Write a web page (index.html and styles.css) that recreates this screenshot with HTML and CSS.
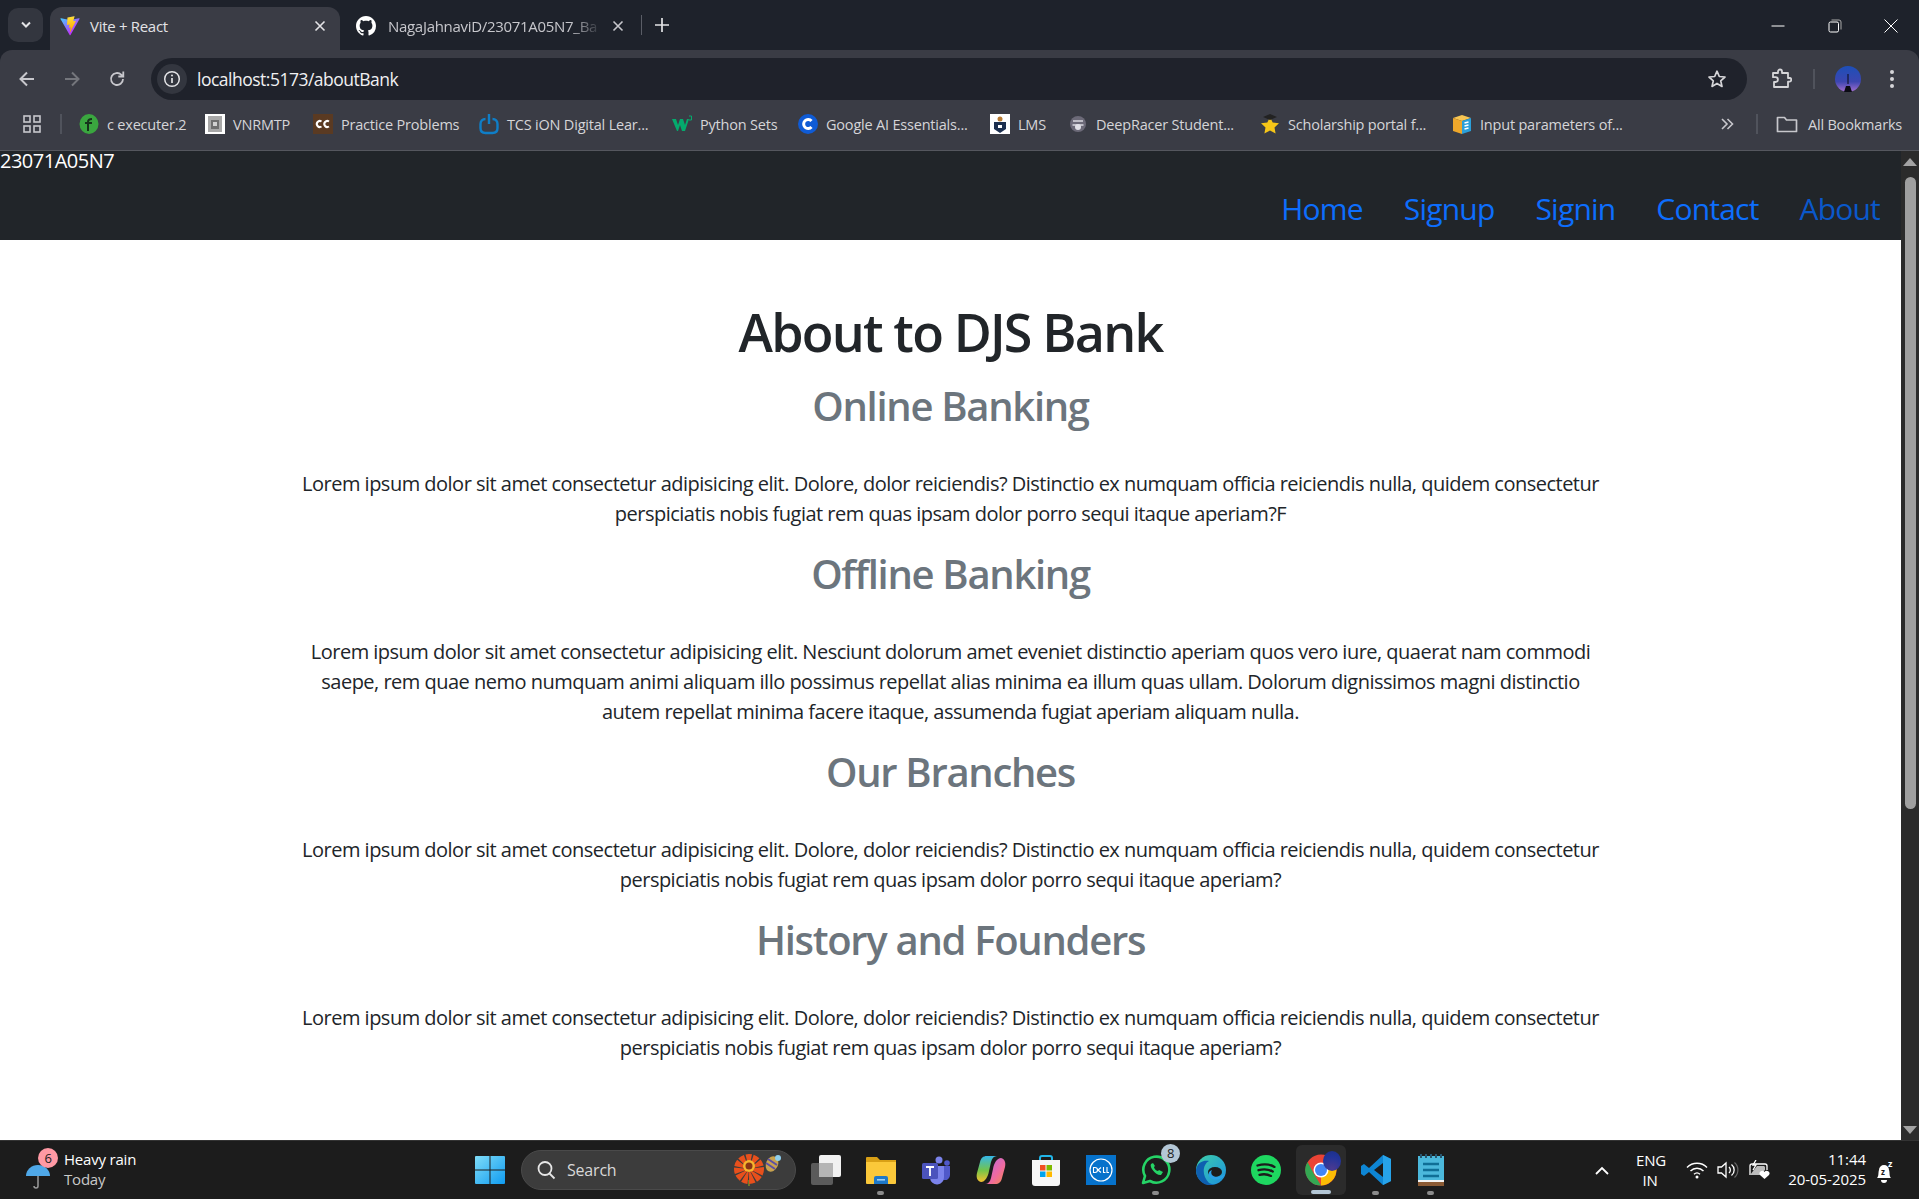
FILE: index.html
```html
<!DOCTYPE html>
<html lang="en">
<head>
    <meta charset="UTF-8">
    <meta name="viewport" content="width=device-width, initial-scale=1.0">
    <title>Vite + React</title>
    <link rel="stylesheet" href="styles.css">
</head>
<body>
    <!-- browser chrome -->
    <div class="tab-strip">
        <div class="tab-search">
            <svg width="12" height="8" viewBox="0 0 12 8"><path d="M2 1.5l4 4 4-4" fill="none" stroke="#e3e3e6" stroke-width="2"/></svg>
        </div>
        <div class="tab tab-active">
            <svg class="favicon" width="20" height="20" viewBox="0 0 410 404">
                <defs>
                    <linearGradient id="viteA" x1="6" y1="33" x2="235" y2="344" gradientUnits="userSpaceOnUse"><stop offset="0" stop-color="#41D1FF"/><stop offset="1" stop-color="#BD34FE"/></linearGradient>
                    <linearGradient id="viteB" x1="194" y1="8" x2="236" y2="292" gradientUnits="userSpaceOnUse"><stop offset="0" stop-color="#FFEA83"/><stop offset=".08" stop-color="#FFDD35"/><stop offset="1" stop-color="#FFA800"/></linearGradient>
                </defs>
                <path fill="url(#viteA)" d="M399.641 59.5246L215.643 388.545C211.844 395.338 202.084 395.378 198.228 388.618L10.5817 59.5563C6.38087 52.1896 12.6802 43.2665 21.0281 44.7586L205.223 77.6824C206.398 77.8924 207.601 77.8904 208.776 77.6763L389.119 44.8058C397.439 43.2894 403.768 52.1434 399.641 59.5246Z"/>
                <path fill="url(#viteB)" d="M292.965 1.5744L156.801 28.2552C154.563 28.6937 152.906 30.5903 152.771 32.8664L144.395 174.33C144.198 177.662 147.258 180.248 150.51 179.498L188.42 170.749C191.967 169.931 195.172 173.055 194.443 176.622L183.18 231.775C182.422 235.487 185.907 238.661 189.532 237.56L212.947 230.446C216.577 229.344 220.065 232.527 219.297 236.242L201.398 322.875C200.278 328.294 207.486 331.249 210.492 326.603L212.5 323.5L323.454 102.072C325.312 98.3645 322.108 94.137 318.036 94.9228L279.014 102.454C275.347 103.161 272.227 99.746 273.262 96.1583L298.731 7.86689C299.767 4.27314 296.636 0.855181 292.965 1.5744Z"/>
            </svg>
            <span class="tab-title">Vite + React</span>
            <svg class="tab-close" width="12" height="12" viewBox="0 0 12 12"><path d="M1.5 1.5l9 9M10.5 1.5l-9 9" stroke="#e3e3e6" stroke-width="1.6"/></svg>
        </div>
        <div class="tab tab-other">
            <svg class="favicon" width="20" height="20" viewBox="0 0 16 16"><path fill="#fff" d="M8 0C3.58 0 0 3.58 0 8c0 3.54 2.29 6.53 5.47 7.59.4.07.55-.17.55-.38 0-.19-.01-.82-.01-1.49-2.01.37-2.53-.49-2.69-.94-.09-.23-.48-.94-.82-1.13-.28-.15-.68-.52-.01-.53.63-.01 1.08.58 1.23.82.72 1.21 1.87.87 2.33.66.07-.52.28-.87.51-1.07-1.78-.2-3.64-.89-3.64-3.95 0-.87.31-1.59.82-2.15-.08-.2-.36-1.02.08-2.12 0 0 .67-.21 2.2.82.64-.18 1.32-.27 2-.27.68 0 1.36.09 2 .27 1.53-1.04 2.2-.82 2.2-.82.44 1.1.16 1.92.08 2.12.51.56.82 1.27.82 2.15 0 3.07-1.87 3.75-3.65 3.95.29.25.54.73.54 1.48 0 1.07-.01 1.93-.01 2.2 0 .21.15.46.55.38A8.013 8.013 0 0016 8c0-4.42-3.58-8-8-8z"/></svg>
            <span class="tab-title tab-title-fade">NagaJahnaviD/23071A05N7_Ba</span>
            <svg class="tab-close" width="12" height="12" viewBox="0 0 12 12"><path d="M1.5 1.5l9 9M10.5 1.5l-9 9" stroke="#c7c7cc" stroke-width="1.6"/></svg>
        </div>
        <div class="tab-sep"></div>
        <svg class="tab-new" width="14" height="14" viewBox="0 0 14 14"><path d="M7 0v14M0 7h14" stroke="#e3e3e6" stroke-width="1.7"/></svg>
        <div class="window-controls">
            <svg width="14" height="14" viewBox="0 0 14 14"><path d="M0.5 7h13" stroke="#fff"/></svg>
            <svg width="14" height="14" viewBox="0 0 14 14"><rect x="1" y="3" width="9.5" height="10" rx="1.5" fill="none" stroke="#fff"/><path d="M3.5 1h7.5a2 2 0 0 1 2 2v7.5" fill="none" stroke="#aaa"/></svg>
            <svg width="14" height="14" viewBox="0 0 14 14"><path d="M.5.5l13 13M13.5.5l-13 13" stroke="#fff"/></svg>
        </div>
    </div>

    <div class="toolbar">
        <svg class="tool back" width="18" height="18" viewBox="0 0 18 18"><path d="M16 9H3M9 2.5L2.5 9 9 15.5" fill="none" stroke="#c7c7cc" stroke-width="2"/></svg>
        <svg class="tool forward" width="18" height="18" viewBox="0 0 18 18"><path d="M2 9h13M9 2.5L15.5 9 9 15.5" fill="none" stroke="#74767c" stroke-width="2"/></svg>
        <svg class="tool reload" width="18" height="18" viewBox="0 0 18 18"><path d="M15 9a6 6 0 1 1-1.8-4.3L15 6.5M15.3 1.5v5h-5" fill="none" stroke="#c7c7cc" stroke-width="1.8"/></svg>
        <div class="omnibox">
            <div class="site-info">
                <svg width="18" height="18" viewBox="0 0 18 18"><circle cx="9" cy="9" r="7.3" fill="none" stroke="#e3e3e6" stroke-width="1.5"/><path d="M9 8v5" stroke="#e3e3e6" stroke-width="1.7"/><circle cx="9" cy="5.5" r="1" fill="#e3e3e6"/></svg>
            </div>
            <span class="url">localhost:5173/aboutBank</span>
            <svg class="star" width="20" height="20" viewBox="0 0 20 20"><path d="M10 2.2l2.3 5.3 5.7.5-4.3 3.8 1.3 5.6-5-3-5 3 1.3-5.6L2 8l5.7-.5z" fill="none" stroke="#d5d5d8" stroke-width="1.7" stroke-linejoin="round"/></svg>
        </div>
        <svg class="ext" width="22" height="22" viewBox="0 0 22 22"><path d="M3 5h5V3.5a2 2 0 0 1 4 0V5h6v5h1.5a1.8 1.8 0 0 1 0 3.6H18V19H4v-5h1.5a2.4 2.4 0 0 0 0-4.8H3z" fill="none" stroke="#d5d5d8" stroke-width="1.8" stroke-linejoin="round"/></svg>
        <div class="tool-sep"></div>
        <svg class="avatar" width="26" height="26" viewBox="0 0 26 26">
            <defs><linearGradient id="sky" x1="0" y1="0" x2="0" y2="1"><stop offset="0" stop-color="#1d4fb8"/><stop offset=".6" stop-color="#3c46b0"/><stop offset="1" stop-color="#a56fd0"/></linearGradient></defs>
            <circle cx="13" cy="13" r="13" fill="url(#sky)"/>
            <path d="M12.500 8h1v10h-1zM9 26l2-6h4l2 6z" fill="#0b0b14"/>
        </svg>
        <svg class="dots" width="6" height="20" viewBox="0 0 6 20"><circle cx="3" cy="3" r="2" fill="#d5d5d8"/><circle cx="3" cy="10" r="2" fill="#d5d5d8"/><circle cx="3" cy="17" r="2" fill="#d5d5d8"/></svg>
    </div>

    <div class="bookmarks">
        <svg class="apps" width="20" height="20" viewBox="0 0 20 20"><g fill="none" stroke="#c7c7cc" stroke-width="1.6"><rect x="2" y="2" width="6" height="6"/><rect x="12" y="2" width="6" height="6"/><rect x="2" y="12" width="6" height="6"/><rect x="12" y="12" width="6" height="6"/></g></svg>
        <div class="bm-sep"></div>
        <div class="bm-list">
            <div class="bm"><svg width="20" height="20" viewBox="0 0 20 20"><ellipse cx="10" cy="10" rx="9.5" ry="10" fill="#3aa63f"/><path d="M9 17V8c0-2 1-3 4-3M6 9h7" fill="none" stroke="#16331b" stroke-width="2"/></svg><span>c executer.2</span></div>
            <div class="bm"><svg width="20" height="20" viewBox="0 0 20 20"><rect width="20" height="20" fill="#fff"/><rect x="3" y="2" width="14" height="16" fill="#a8a8a8"/><rect x="6" y="6" width="8" height="9" fill="#6e6e6e"/><rect x="8" y="8" width="4" height="4" fill="#d0d0d0"/></svg><span>VNRMTP</span></div>
            <div class="bm"><svg width="20" height="20" viewBox="0 0 20 20"><rect width="20" height="20" fill="#5a3a22"/><path d="M8.500 7.500a3 3 0 1 0 0 5M16 7.500a3 3 0 1 0 0 5" fill="none" stroke="#fff" stroke-width="2"/></svg><span>Practice Problems</span></div>
            <div class="bm"><svg width="20" height="22" viewBox="0 0 20 22"><path d="M6 6H6.500C3.500 6 1.500 8 1.500 11v4c0 3 2 5 5 5h7c3 0 5-2 5-5v-4c0-3-2-5-5-5H14M10 1v10" fill="none" stroke="#0f7ec7" stroke-width="2.400"/></svg><span>TCS iON Digital Lear...</span></div>
            <div class="bm"><svg width="20" height="20" viewBox="0 0 20 20"><path d="M0 5h4l2 6 2-6h3l2 6 2-6h2l-4 12h-3l-2-6-2 6H5z" fill="#04aa6d"/><path d="M17 2h2.500v4H17" fill="none" stroke="#04aa6d"/></svg><span>Python Sets</span></div>
            <div class="bm"><svg width="20" height="20" viewBox="0 0 20 20"><circle cx="10" cy="10" r="10" fill="#0f5bd5"/><path d="M13.500 7a4.500 4.500 0 1 0 0 6" fill="none" stroke="#fff" stroke-width="3"/></svg><span>Google AI Essentials...</span></div>
            <div class="bm"><svg width="20" height="20" viewBox="0 0 20 20"><rect width="20" height="20" fill="#fff"/><path d="M4 8h12v7l-6 4-6-4z" fill="#1c2f4f"/><circle cx="10" cy="5" r="2.500" fill="#b77a32"/><rect x="8" y="11" width="4" height="3" fill="#fff"/></svg><span>LMS</span></div>
            <div class="bm"><svg width="20" height="20" viewBox="0 0 20 20"><circle cx="10" cy="10" r="8" fill="#6c6a78"/><path d="M5 7h10M4.500 11h11" stroke="#d8d8de" stroke-width="1.500"/><circle cx="10" cy="13" r="3" fill="#e0e0e6"/></svg><span>DeepRacer Student...</span></div>
            <div class="bm"><svg width="20" height="22" viewBox="0 0 20 22"><path d="M10 4l2.700 5.400 6.300.8-4.500 4.200 1.100 6L10 17.600l-5.600 2.800 1.100-6L1 10.200l6.300-.8z" fill="#f5c518"/><path d="M3 4l7-3 7 3-7 3z" fill="#222"/></svg><span>Scholarship portal f...</span></div>
            <div class="bm"><svg width="20" height="20" viewBox="0 0 20 20"><path d="M1 4l9-3 9 3-9 3z" fill="#f7c552"/><path d="M1 4l9 3v13l-9-3z" fill="#eea72b"/><path d="M10 7l9-3v13l-9 3z" fill="#2b9fd9"/><path d="M12.500 9l4-1M12.500 12l4-1M12.500 15l4-1" stroke="#fff" stroke-width="1.400"/></svg><span>Input parameters of...</span></div>
        </div>
        <svg class="bm-more" width="14" height="14" viewBox="0 0 14 14"><path d="M2 2l5 5-5 5M7.500 2l5 5-5 5" fill="none" stroke="#c7c7cc" stroke-width="1.600"/></svg>
        <div class="bm-sep bm-sep-right"></div>
        <div class="bm bm-all"><svg width="22" height="20" viewBox="0 0 22 20"><path d="M1.500 3.500h7l2 2.500h10v11.500h-19z" fill="none" stroke="#c7c7cc" stroke-width="1.700" stroke-linejoin="round"/></svg><span>All Bookmarks</span></div>
    </div>

    <!-- page -->
    <div class="viewport">
        <div class="page">
            <nav class="navbar">
                <div class="brand">23071A05N7</div>
                <div class="nav-links">
                    <a>Home</a>
                    <a>Signup</a>
                    <a>Signin</a>
                    <a>Contact</a>
                    <a class="nav-current">About</a>
                </div>
            </nav>
            <div class="container">
                <h1>About to DJS Bank</h1>
                <h2>Online Banking</h2>
                <p>Lorem ipsum dolor sit amet consectetur adipisicing elit. Dolore, dolor reiciendis? Distinctio ex numquam officia reiciendis nulla, quidem consectetur perspiciatis nobis fugiat rem quas ipsam dolor porro sequi itaque aperiam?F</p>
                <h2>Offline Banking</h2>
                <p>Lorem ipsum dolor sit amet consectetur adipisicing elit. Nesciunt dolorum amet eveniet distinctio aperiam quos vero iure, quaerat nam commodi saepe, rem quae nemo numquam animi aliquam illo possimus repellat alias minima ea illum quas ullam. Dolorum dignissimos magni distinctio autem repellat minima facere itaque, assumenda fugiat aperiam aliquam nulla.</p>
                <h2>Our Branches</h2>
                <p>Lorem ipsum dolor sit amet consectetur adipisicing elit. Dolore, dolor reiciendis? Distinctio ex numquam officia reiciendis nulla, quidem consectetur perspiciatis nobis fugiat rem quas ipsam dolor porro sequi itaque aperiam?</p>
                <h2>History and Founders</h2>
                <p>Lorem ipsum dolor sit amet consectetur adipisicing elit. Dolore, dolor reiciendis? Distinctio ex numquam officia reiciendis nulla, quidem consectetur perspiciatis nobis fugiat rem quas ipsam dolor porro sequi itaque aperiam?</p>
            </div>
        </div>
        <div class="scrollbar">
            <svg width="14" height="8" viewBox="0 0 14 8"><path d="M7 0l7 8H0z" fill="#a3a3a3"/></svg>
            <div class="scroll-thumb"></div>
            <div class="scroll-rest"></div>
            <svg width="14" height="8" viewBox="0 0 14 8"><path d="M7 8L0 0h14z" fill="#a3a3a3"/></svg>
        </div>
    </div>

    <!-- taskbar -->
    <div class="taskbar">
        <div class="weather">
            <div class="weather-icon">
                <svg width="26" height="26" viewBox="0 0 26 26"><path d="M1 12a12 11 0 0 1 24 0z" fill="#4fa8e8"/><path d="M13 12v10a2 2 0 0 1-4 0" fill="none" stroke="#9a9a9a" stroke-width="1.500"/></svg>
                <span class="badge-red">6</span>
            </div>
            <div class="weather-text">
                <div>Heavy rain</div>
                <div class="weather-sub">Today</div>
            </div>
        </div>
        <div class="task-center">
            <svg class="winlogo" width="30" height="30" viewBox="0 0 30 30"><defs><linearGradient id="win" x1="0" y1="0" x2="1" y2="1"><stop offset="0" stop-color="#7fdcf7"/><stop offset="1" stop-color="#0f9bf0"/></linearGradient></defs><path fill="url(#win)" d="M1 1h13.500v13.500H0V2a1 1 0 0 1 1-1zM15.500 1H29a1 1 0 0 1 1 1v12.500H15.500zM0 15.500h14.500V29H1a1 1 0 0 1-1-1zM15.500 15.500H30V28a1 1 0 0 1-1 1H15.500z"/></svg>
            <div class="task-search">
                <svg width="22" height="22" viewBox="0 0 22 22"><circle cx="10" cy="9.500" r="6.500" fill="none" stroke="#e6e6e6" stroke-width="1.800"/><path d="M14.500 14.500l5 5" stroke="#e6e6e6" stroke-width="1.800"/></svg>
                <span>Search</span>
                <svg class="search-art" width="48" height="32" viewBox="0 0 48 32">
                    <path d="M15 26v6" stroke="#6a7a2c" stroke-width="2"/>
                    <circle cx="15" cy="15" r="9" fill="none" stroke="#e8501c" stroke-width="12" stroke-dasharray="4 1"/>
                    <circle cx="15" cy="12" r="6" fill="#f5b52e"/>
                    <circle cx="15" cy="12" r="3.500" fill="#8a3414"/>
                    <ellipse cx="38" cy="10" rx="6" ry="8" fill="#c8a24f" transform="rotate(25 38 10)"/>
                    <path d="M34 5l9 6M32 9l9 6" stroke="#5b4fa6" stroke-width="2"/>
                    <circle cx="44" cy="4" r="3" fill="#8fd0ee"/>
                </svg>
            </div>
            <div class="task-icons">
                <div class="task-icon">
                    <svg width="30" height="30" viewBox="0 0 30 30"><rect x="0" y="8" width="22" height="22" rx="2" fill="#5b5b5b"/><rect x="8" y="0" width="22" height="22" rx="2" fill="#f1f1f1"/><rect x="8" y="8" width="14" height="14" fill="#b5b5b5"/></svg>
                </div>
                <div class="task-icon task-open">
                    <svg width="30" height="30" viewBox="0 0 30 30"><path d="M0 3a1 1 0 0 1 1-1h10l3 3h16v3H0z" fill="#d9a016"/><path d="M0 7h30v21a1 1 0 0 1-1 1H1a1 1 0 0 1-1-1z" fill="#fbc83a"/><path d="M8 29v-6a2 2 0 0 1 2-2h10a2 2 0 0 1 2 2v6z" fill="#1e78c8"/><rect x="11" y="24" width="8" height="1.600" fill="#9cd0f5"/></svg>
                </div>
                <div class="task-icon">
                    <svg width="30" height="30" viewBox="0 0 30 30"><circle cx="18" cy="5" r="3.500" fill="#7b83eb"/><circle cx="26" cy="8" r="2.800" fill="#5059c9"/><path d="M17 11h12v9a5 5 0 0 1-6 5l-6-3z" fill="#5059c9"/><path d="M9 11h14v11a7 7 0 0 1-14 1z" fill="#7b83eb"/><rect x="1" y="8" width="16" height="16" rx="1.500" fill="#4b53bc"/><path d="M5 12h8M9 12v9" stroke="#fff" stroke-width="1.800"/></svg>
                </div>
                <div class="task-icon">
                    <svg width="30" height="30" viewBox="0 0 30 30"><defs><linearGradient id="cop1" x1="0" y1="0" x2="0" y2="1"><stop offset="0" stop-color="#35b7e8"/><stop offset=".55" stop-color="#74c44a"/><stop offset="1" stop-color="#f6c02d"/></linearGradient><linearGradient id="cop2" x1="0" y1="0" x2="1" y2="1"><stop offset="0" stop-color="#b06ae8"/><stop offset=".6" stop-color="#f06aa0"/><stop offset="1" stop-color="#f58a4a"/></linearGradient></defs><path d="M11 1h10c-3 0-5 2-6 6l-2 9c-1 6-4 11-8 11-4-1-5-5-4-9l3-11c1-4 3-6 7-6z" fill="url(#cop1)"/><path d="M19 29H9c3 0 5-2 6-6l2-9c1-6 4-11 8-11 4 1 5 5 4 9l-3 11c-1 4-3 6-7 6z" fill="url(#cop2)"/></svg>
                </div>
                <div class="task-icon">
                    <svg width="30" height="32" viewBox="0 0 30 32"><path d="M9 7V4a2 2 0 0 1 2-2h8a2 2 0 0 1 2 2v3" fill="none" stroke="#21b5e8" stroke-width="2"/><path d="M1 6h28v23a3 3 0 0 1-3 3H4a3 3 0 0 1-3-3z" fill="#f6f6f6"/><rect x="9" y="11" width="5.500" height="5.500" fill="#f25022"/><rect x="15.500" y="11" width="5.500" height="5.500" fill="#7fba00"/><rect x="9" y="17.500" width="5.500" height="5.500" fill="#00a4ef"/><rect x="15.500" y="17.500" width="5.500" height="5.500" fill="#ffb900"/></svg>
                </div>
                <div class="task-icon">
                    <svg width="30" height="30" viewBox="0 0 30 30"><rect width="30" height="30" fill="#0672cb"/><circle cx="15" cy="15" r="11" fill="none" stroke="#fff" stroke-width="1.200"/><path d="M7.500 12.500v5h1.500a2.500 2.500 0 0 0 0-5zM12 15l3-2.500M12 15l3 2.500M17.500 12v5.500h2M21 12v5.500h2" fill="none" stroke="#fff" stroke-width="1.100"/></svg>
                </div>
                <div class="task-icon task-open">
                    <svg width="30" height="30" viewBox="0 0 30 30"><path d="M2 28l2-7a13 13 0 1 1 5 5z" fill="none" stroke="#25d366" stroke-width="2.600" stroke-linejoin="round"/><path d="M10 9c-2 3 5 12 10 11l2-3-4-2-1 1c-2 0-4-3-4-4l1-1-2-3z" fill="#25d366"/></svg>
                    <span class="badge-grey">8</span>
                </div>
                <div class="task-icon">
                    <svg width="30" height="30" viewBox="0 0 30 30"><defs><linearGradient id="edge" x1="0" y1="0" x2="1" y2="1"><stop offset="0" stop-color="#3fd0a8"/><stop offset="1" stop-color="#1a8fe0"/></linearGradient></defs><circle cx="15" cy="15" r="15" fill="url(#edge)"/><path d="M0 15C1 7 8 5 13 6c-6 3-8 14 0 22 2 1 4 2 7 1.500C10 33 0 26 0 15z" fill="#0e5fb0"/><ellipse cx="19" cy="17" rx="7" ry="5" fill="#1c1c1c"/><path d="M16 15c-2 3 0 7 5 7 3 0 6-1 8-3-2 6-12 8-16 2-1-3 0-5 3-6z" fill="#2aa0e8"/></svg>
                </div>
                <div class="task-icon">
                    <svg width="30" height="30" viewBox="0 0 30 30"><circle cx="15" cy="15" r="15" fill="#1ed760"/><path d="M6.500 10.500c6-1.800 12-1.400 17 1.400M7.500 15.200c5-1.400 10-1 14.300 1.300M8.500 19.800c4.300-1 8-.7 11.500 1.100" fill="none" stroke="#1c1c1c" stroke-width="2.300" stroke-linecap="round"/></svg>
                </div>
                <div class="task-icon task-active">
                    <svg width="32" height="32" viewBox="0 0 32 32"><circle cx="16" cy="16" r="15.500" fill="#ea4335"/><path d="M16 31.500A15.500 15.500 0 0 0 30 9.500H16z" fill="#fbbc04"/><path d="M2.500 8L9 20l7 11.500A15.500 15.500 0 0 1 2.500 8z" fill="#34a853"/><circle cx="16" cy="16" r="7.500" fill="#fff"/><circle cx="16" cy="16" r="6" fill="#4285f4"/></svg>
                    <span class="chrome-avatar"></span>
                </div>
                <div class="task-icon task-open">
                    <svg width="30" height="30" viewBox="0 0 30 30"><path d="M22 0l8 4v22l-8 4-14-13-5 4-3-2v-8l3-2 5 4z" fill="#0e86d4"/><path d="M22 8L13 15l9 7z" fill="#1c1c1c"/><path d="M22 0l8 4v22l-8 4z" fill="#27a3ea"/></svg>
                </div>
                <div class="task-icon task-open">
                    <svg width="26" height="32" viewBox="0 0 26 32"><rect y="2" width="26" height="30" fill="#4bb8dc"/><rect y="28" width="26" height="4" fill="#8a5a34"/><rect y="26" width="26" height="2" fill="#f3f3f3"/><path d="M5 10h16M5 16h16M5 22h16" stroke="#0f6e96" stroke-width="2.400"/><path d="M3 0v4M8 0v4M13 0v4M18 0v4M23 0v4" stroke="#27566e" stroke-width="2"/></svg>
                </div>
            </div>
        </div>
        <div class="tray">
            <svg class="tray-up" width="14" height="9" viewBox="0 0 14 9"><path d="M1 8l6-6 6 6" fill="none" stroke="#fff" stroke-width="1.800"/></svg>
            <div class="lang"><div>ENG</div><div>IN</div></div>
            <svg class="wifi" width="22" height="18" viewBox="0 0 22 18"><path d="M1 6.500a14 14 0 0 1 20 0M4.500 10a9 9 0 0 1 13 0M8 13.200a4.500 4.500 0 0 1 6 0" fill="none" stroke="#fff" stroke-width="1.400"/><circle cx="11" cy="16" r="1.500" fill="#fff"/></svg>
            <svg class="volume" width="22" height="18" viewBox="0 0 22 18"><path d="M1 6h3.500L9 2v14l-4.500-4H1z" fill="none" stroke="#fff" stroke-width="1.300"/><path d="M12 6a4 4 0 0 1 0 6M14.500 3.500a7 7 0 0 1 0 11" fill="none" stroke="#fff" stroke-width="1.300"/><path d="M17.500 1.500a10 10 0 0 1 0 15" fill="none" stroke="#666" stroke-width="1.200"/></svg>
            <svg class="battery" width="22" height="20" viewBox="0 0 22 20"><path d="M2 15V6a2 2 0 0 1 2-2h13a2 2 0 0 1 2 2v4" fill="none" stroke="#fff" stroke-width="1.300"/><path d="M2 15l7-9h7a2 2 0 0 1 1 1v3l-5 5z" fill="#bbb"/><path d="M8 0L5 5h3L5 10" fill="none" stroke="#fff" stroke-width="1.300"/><path d="M16.500 19l-4.500-4a2.600 2.600 0 0 1 4.500-3 2.600 2.600 0 0 1 4.500 3z" fill="#fff"/></svg>
            <div class="clock"><div>11:44</div><div>20-05-2025</div></div>
            <svg class="bell" width="24" height="26" viewBox="0 -5 24 26"><path d="M2 16c2-2 1-5 2-8a5 5 0 0 1 10 0c1 3 0 6 2 8z" fill="#fff"/><path d="M6 18h6a3 3 0 0 1-6 0z" fill="#fff"/><text x="6" y="13" class="bell-z">z</text><text x="13" y="5" class="bell-z-big">z</text></svg>
        </div>
    </div>
</body>
</html>
```

FILE: styles.css
```css
* {
    margin: 0;
    padding: 0;
    box-sizing: border-box;
}

html, body {
    width: 1919px;
    height: 1199px;
    overflow: hidden;
}

body {
    font-family: 'Open Sans', 'Noto Sans', sans-serif;
    background: #1e222b;
    display: flex;
    flex-direction: column;
}

svg {
    display: block;
    flex: none;
}

/* tab strip */
.tab-strip {
    height: 50px;
    display: flex;
    align-items: flex-end;
    background: #1e222b;
    color: #e3e3e6;
    font-size: 15px;
    letter-spacing: -0.3px;
}

.tab-search {
    width: 35px;
    height: 34px;
    margin: 0 7px 8px 8px;
    border-radius: 10px;
    background: #33363f;
    display: flex;
    align-items: center;
    justify-content: center;
}

.tab {
    height: 43px;
    display: flex;
    align-items: center;
    padding-bottom: 6px;
}

.tab-active {
    width: 290px;
    padding-left: 10px;
    padding-right: 9px;
    background: #3a3c45;
    border-radius: 12px 12px 0 0;
}

.tab-active .favicon {
    margin-right: 10px;
}

.tab-other {
    width: 284px;
    padding-left: 16px;
    color: #c7c7cc;
}

.favicon {
    margin-right: 12px;
}

.tab-title {
    flex: 1;
    min-width: 0;
    white-space: nowrap;
}

.tab-title-fade {
    -webkit-mask-image: linear-gradient(90deg, #000 85%, transparent);
    mask-image: linear-gradient(90deg, #000 85%, transparent);
}

.tab-close {
    margin-left: 10px;
    margin-right: 5px;
}

.tab-other .tab-close {
    margin-left: 10px;
    margin-right: 0;
}

.tab-sep {
    width: 1px;
    height: 20px;
    margin: 0 0 15px 17px;
    background: #5a5d66;
}

.tab-new {
    margin: 0 0 18px 13px;
}

.window-controls {
    margin-left: auto;
    width: 150px;
    height: 100%;
    padding: 19px 21px 0 2px;
    display: flex;
    justify-content: space-between;
    align-items: flex-start;
}

/* toolbar */
.toolbar {
    height: 50px;
    padding-top: 8px;
    background: #3a3c45;
    border-radius: 12px 12px 0 0;
    display: flex;
    align-items: center;
}

.back { margin-left: 18px; }
.forward { margin-left: 27px; }
.reload { margin-left: 27px; }

.omnibox {
    width: 1596px;
    height: 42px;
    margin-left: 25px;
    border-radius: 21px;
    background: #1f222b;
    display: flex;
    align-items: center;
    color: #f0f0f2;
    font-size: 17.5px;
    letter-spacing: -0.5px;
}

.site-info {
    width: 30px;
    height: 30px;
    margin-left: 6px;
    border-radius: 50%;
    background: #33363f;
    display: flex;
    align-items: center;
    justify-content: center;
}

.url {
    margin-left: 10px;
    flex: 1;
}

.star { margin-right: 20px; }
.ext { margin-left: 23px; }

.tool-sep {
    width: 2px;
    height: 20px;
    margin-left: 21px;
    background: #50535c;
}

.avatar { margin-left: 20px; }
.dots { margin-left: 28px; }

/* bookmarks */
.bookmarks {
    height: 51px;
    padding-bottom: 2px;
    background: #3a3c45;
    border-bottom: 1px solid #55575e;
    display: flex;
    align-items: center;
    color: #d5d5d8;
    font-size: 14.5px;
    letter-spacing: -0.2px;
}

.apps { margin-left: 22px; }

.bm-sep {
    width: 2px;
    height: 20px;
    margin-left: 18px;
    background: #50535c;
}

.bm-list {
    width: 1640px;
    margin-left: 17px;
    display: grid;
    grid-template-columns: 126px 108px 166px 193px 126px 192px 78px 192px 192px 1fr;
    align-items: center;
}

.bm {
    display: flex;
    align-items: center;
    gap: 8px;
    white-space: nowrap;
}

.bm-more { margin-left: 1px; }

.bm-sep-right {
    margin-left: 22px;
}

.bm-all { margin-left: 18px; gap: 10px; }

/* page */
.viewport {
    flex: 1;
    min-height: 0;
    display: flex;
}

.page {
    flex: 1;
    min-width: 0;
    background: #fff;
    color: #212529;
    font-size: 20px;
    line-height: 30px;
}

.navbar {
    height: 89px;
    background: #212529;
    color: #fff;
    letter-spacing: -0.5px;
}

.brand {
    line-height: 20px;
}

.nav-links {
    display: flex;
    justify-content: flex-end;
    gap: 41px;
    padding-right: 21px;
    margin-top: 18px;
    font-size: 30px;
    line-height: 40px;
    letter-spacing: -0.8px;
    color: #0d6efd;
}

.nav-current {
    color: #0a58ca;
}

.container {
    width: 1320px;
    padding: 0 8px;
    margin: 0 auto;
    text-align: center;
    letter-spacing: -0.51px;
}

h1 {
    margin-top: 63px;
    font-size: 52px;
    line-height: 58px;
    font-weight: 600;
    letter-spacing: -1.8px;
}

h2 {
    margin-top: 21px;
    margin-bottom: 39px;
    font-size: 40px;
    line-height: 48px;
    font-weight: 600;
    color: #6c757d;
    letter-spacing: -1.3px;
}

.scrollbar {
    width: 18px;
    background: #2b2b2b;
    display: flex;
    flex-direction: column;
    align-items: center;
    padding: 7px 0 6px;
}

.scroll-thumb {
    width: 11px;
    height: 632px;
    margin-top: 11px;
    border-radius: 6px;
    background: #9f9f9f;
}

.scroll-rest {
    flex: 1;
}

/* taskbar */
.taskbar {
    height: 59px;
    background: #1c1c1c;
    border-top: 1px solid #333;
    display: flex;
    align-items: center;
    color: #fff;
    font-size: 15px;
    letter-spacing: -0.2px;
    line-height: 20px;
}

.weather {
    width: 475px;
    display: flex;
    align-items: center;
    padding-left: 25px;
}

.weather-icon {
    position: relative;
    width: 26px;
    margin-top: 14px;
}

.badge-red {
    position: absolute;
    top: -16px;
    left: 13px;
    width: 20px;
    height: 20px;
    border-radius: 50%;
    background: #ff99a4;
    color: #1c1c1c;
    text-align: center;
    font-size: 13px;
}

.weather-text {
    margin-left: 13px;
    margin-bottom: 3px;
}

.weather-sub {
    color: #c9c9c9;
}

.task-center {
    display: flex;
    align-items: center;
}

.task-search {
    width: 275px;
    height: 40px;
    margin-left: 16px;
    border-radius: 20px;
    background: #3c3c3c;
    border: 1px solid #4a4a4a;
    display: flex;
    align-items: center;
    padding-left: 13px;
    color: #d8d8d8;
    font-size: 16px;
}

.task-search span {
    margin-left: 10px;
    flex: 1;
}

.search-art {
    margin-right: 13px;
}

.task-icons {
    margin-left: 2px;
    display: flex;
    align-items: center;
}

.task-icon {
    position: relative;
    width: 55px;
    height: 50px;
    display: flex;
    align-items: center;
    justify-content: center;
}

.task-open::after {
    content: "";
    position: absolute;
    left: 24px;
    bottom: 0;
    width: 7px;
    height: 4px;
    border-radius: 2px;
    background: #8c8c8c;
}

.task-active {
    width: 50px;
    margin: 0 2.5px;
    background: #2b2b2b;
    border-radius: 6px;
}

.task-active::after {
    content: "";
    position: absolute;
    left: 15px;
    bottom: 1px;
    width: 20px;
    height: 4px;
    border-radius: 2px;
    background: #b4c7d6;
}

.badge-grey {
    position: absolute;
    top: -1px;
    right: 3px;
    width: 19px;
    height: 19px;
    border-radius: 50%;
    background: #b4c7d6;
    color: #1c1c1c;
    text-align: center;
    font-size: 13px;
    line-height: 19px;
}

.chrome-avatar {
    position: absolute;
    top: 6px;
    right: 5px;
    width: 18px;
    height: 20px;
    border-radius: 50%;
    background: radial-gradient(circle at 50% 90%, #4b3a90 0, #22349a 60%, #1c2f86 100%);
}

.tray {
    flex: 1;
    display: flex;
    align-items: center;
}

.tray-up { margin-left: 137px; }

.lang {
    margin-left: 27px;
    width: 28px;
    text-align: center;
}

.wifi { margin-left: 22px; }
.volume { margin-left: 9px; }
.battery { margin-left: 9px; }

.clock {
    margin-left: 5px;
    margin-bottom: 2px;
    width: 91px;
    text-align: right;
    white-space: nowrap;
    letter-spacing: -0.05px;
}

.bell { margin-left: 9px; }

.bell-z {
    font-size: 8px;
    font-weight: 700;
    fill: #1c1c1c;
}

.bell-z-big {
    font-size: 9px;
    font-weight: 700;
    fill: #fff;
}
```
